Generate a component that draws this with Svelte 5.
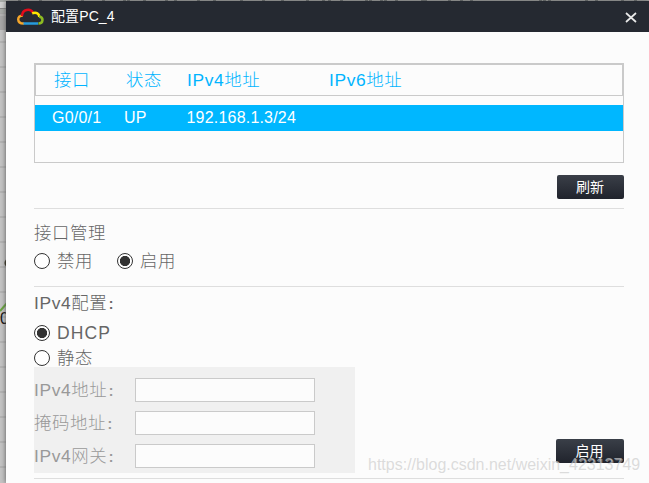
<script>
  const columns = ['接口', '状态', 'IPv4地址', 'IPv6地址'];
  const row = ['G0/0/1', 'UP', '192.168.1.3/24', ''];
  const fields = ['IPv4地址', '掩码地址', 'IPv4网关'];
  const gridLines = [14, 41, 66, 91, 116, 141, 166, 191, 216, 241, 266, 291, 316, 341, 366, 391, 416, 441, 466];
  const ticks = [18, 39, 60, 81, 102, 123, 127, 143, 165, 174, 197, 213, 240, 262, 281, 306, 322, 328, 340, 365, 369, 380, 384, 395, 421, 424, 448, 460, 470, 539, 543, 548, 585, 595, 621, 634];
  let state = $state('启用');
  let mode = $state('DHCP');
</script>

<div class="screen">
  <svg class="backdrop" width="649" height="483" aria-hidden="true">
    <rect width="649" height="483" fill="#c4c4c4" />
    <rect width="649" height="14" fill="#a9aca9" />
    <rect y="2" width="6" height="6" fill="#d0d0d0" />
    <rect y="8" width="6" height="1" fill="#888" />
    <rect y="13" width="6" height="17" fill="#a7a7a7" />
    {#each gridLines as y}
      <rect {y} width="6" height="2" fill="#b4b4b4" />
    {/each}
    {#each ticks as x}
      <rect {x} width="3" height="1" fill="#666b6b" />
    {/each}
    <circle cx="9" cy="263" r="4.5" fill="#26200c" />
    <path d="M0 311L7 303" stroke="#68a53d" stroke-width="2" />
    <text x="0" y="324" font-size="16" fill="#111">0</text>
  </svg>

  <main class="dialog">
    <header>
      <svg class="logo" width="28" height="18" viewBox="0 0 28 18" fill="none" stroke-width="2.5">
        <path d="M7 15.5H22" stroke="#269bdc" />
        <path d="M7.5 15.5C.6 15.5.6 7.5 6.8 7.4" stroke="#f5a62b" />
        <path d="M6 8C6.3 .9 14.6 .2 17 4.8" stroke="#e30b19" />
        <path d="M16.2 5.2Q23 3.5 23.3 9" stroke="#ffe600" />
        <path d="M23 8.5C28 9.4 27.4 15.5 22.4 15.5" stroke="#8dbb22" />
      </svg>
      <h1>配置PC_4</h1>
      <svg class="close" width="12" height="11" viewBox="0 0 12 11" fill="none" stroke="#e8e8e8" stroke-width="1.7">
        <path d="M1 1L11 10M11 1L1 10" />
      </svg>
    </header>

    <div class="content">
      <section class="table">
        <div class="cells head">
          {#each columns as c}<span>{c}</span>{/each}
        </div>
        <div class="cells row">
          {#each row as c}<span>{c}</span>{/each}
        </div>
      </section>
      <div class="refresh"><button>刷新</button></div>

      <section class="manage">
        <h2>接口管理</h2>
        <div class="options">
          {#each ['禁用', '启用'] as o}
            <label><input type="radio" bind:group={state} value={o} /><span>{o}</span></label>
          {/each}
        </div>
      </section>

      <section class="config">
        <h2>IPv4配置<i>:</i></h2>
        <label class="dhcp"><input type="radio" bind:group={mode} value="DHCP" /><span>DHCP</span></label>
        <label class="static"><input type="radio" bind:group={mode} value="静态" /><span>静态</span></label>
        <div class="bottom">
          <div class="form">
            {#each fields as f}
              <div class="field"><span>{f}<i>:</i></span><input type="text" aria-label={f} disabled /></div>
            {/each}
          </div>
          <button class="apply">启用</button>
        </div>
        <div class="rule"></div>
      </section>
    </div>
  </main>
  <div class="watermark">https://blog.csdn.net/weixin_42313749</div>
</div>

<style>
  :global(body) { margin: 0; overflow: hidden; }
  * { box-sizing: border-box; }
  .screen {
    position: relative; width: 649px; height: 483px; overflow: hidden; padding: 1px 0 0 6px;
    font-family: "Liberation Sans", "Noto Sans CJK SC", sans-serif; font-size: 17.4px; letter-spacing: 0.6px;
  }
  .backdrop { position: absolute; left: 0; top: 0; letter-spacing: 0; }
  .dialog { position: relative; height: 482px; background: #fcfcfc; box-shadow: 0 0 5px #555; }
  header { display: flex; height: 31px; align-items: center; padding: 0 12px 0 10px; background: #252931; }
  .logo { margin-top: 1px; }
  h1 { margin: -1px 0 0 7px; color: #fff; font-size: 14px; font-weight: 400; line-height: 20px; letter-spacing: 0.1px; flex: 1; }
  .close { margin-top: 2px; }
  .content { padding: 31px 25px 0 28px; }
  .table { height: 100px; border: 1px solid #cacaca; }
  .cells { display: grid; grid-template-columns: 72px 61px 142px 1fr; align-items: center; white-space: nowrap; }
  .head { height: 32px; border: 1px solid #cacaca; padding-left: 18px; color: #00b4ff; font-weight: 300; }
  .row { height: 26px; margin-top: 9px; padding-left: 17px; background: #00b7ff; color: #fff; font-size: 16px; letter-spacing: 0.2px; }
  .row span:nth-child(3) { padding-left: 1.5px; }
  .head span { line-height: 26px; padding-bottom: 1px; }
  .refresh { display: flex; justify-content: flex-end; height: 45px; padding-top: 12px; }
  button {
    width: 67px; height: 24px; padding: 0 1px 1px 0; border: 0; border-radius: 2px;
    background: linear-gradient(#3a3f48, #20232c); color: #fff;
    font: 400 14px/22px "Liberation Sans", "Noto Sans CJK SC", sans-serif;
  }
  .manage { height: 78px; border-top: 1px solid #dedede; }
  h2 { margin: 0; font-size: 17.4px; font-weight: 300; line-height: 26px; color: #666; }
  i { display: inline-block; padding-left: 1.5px; font-style: normal; font-weight: 700; font-size: 14px; }
  .manage h2 { height: 37px; padding-top: 11px; }
  .options { display: flex; gap: 24px; height: 30px; align-items: center; }
  label { display: flex; align-items: center; gap: 7px; color: #666; font-weight: 300; line-height: 25px; }
  input[type="radio"] {
    appearance: none; width: 16px; height: 16px; margin: 0; border: 1px solid #333; border-radius: 50%; background: #fff;
  }
  input[type="radio"]:checked { background: radial-gradient(circle, #333 0 4.8px, #fff 5.4px); }
  .config { border-top: 1px solid #dedede; }
  .config h2 { height: 29px; padding-top: 3px; }
  .dhcp { height: 25px; margin-top: 4px; font-size: 17.5px; }
  .dhcp span { letter-spacing: 1.1px; padding-top: 1px; }
  .static { height: 26px; }
  .static span { padding-top: 1px; }
  .bottom { display: flex; justify-content: space-between; height: 111px; margin-top: -4px; }
  .form { width: 321px; height: 106px; background: #f0f0f0; padding-top: 11px; }
  .field { display: flex; height: 24px; margin-bottom: 9px; align-items: center; color: #999; font-weight: 300; }
  .field span { width: 101px; line-height: 24px; white-space: nowrap; }
  input[type="text"] { width: 180px; height: 24px; border: 1px solid #cacaca; background: #fcfcfc; padding: 0; }
  .apply { width: 68px; margin-top: 72px; }
  .rule { border-top: 1px solid #dedede; }
  .watermark {
    position: absolute; left: 368px; top: 455px; font-size: 16px; line-height: 20px; letter-spacing: 0;
    color: rgb(205 205 205 / 70%); text-shadow: 1px 1px 0 rgb(255 255 255 / 40%); white-space: nowrap;
  }
</style>
